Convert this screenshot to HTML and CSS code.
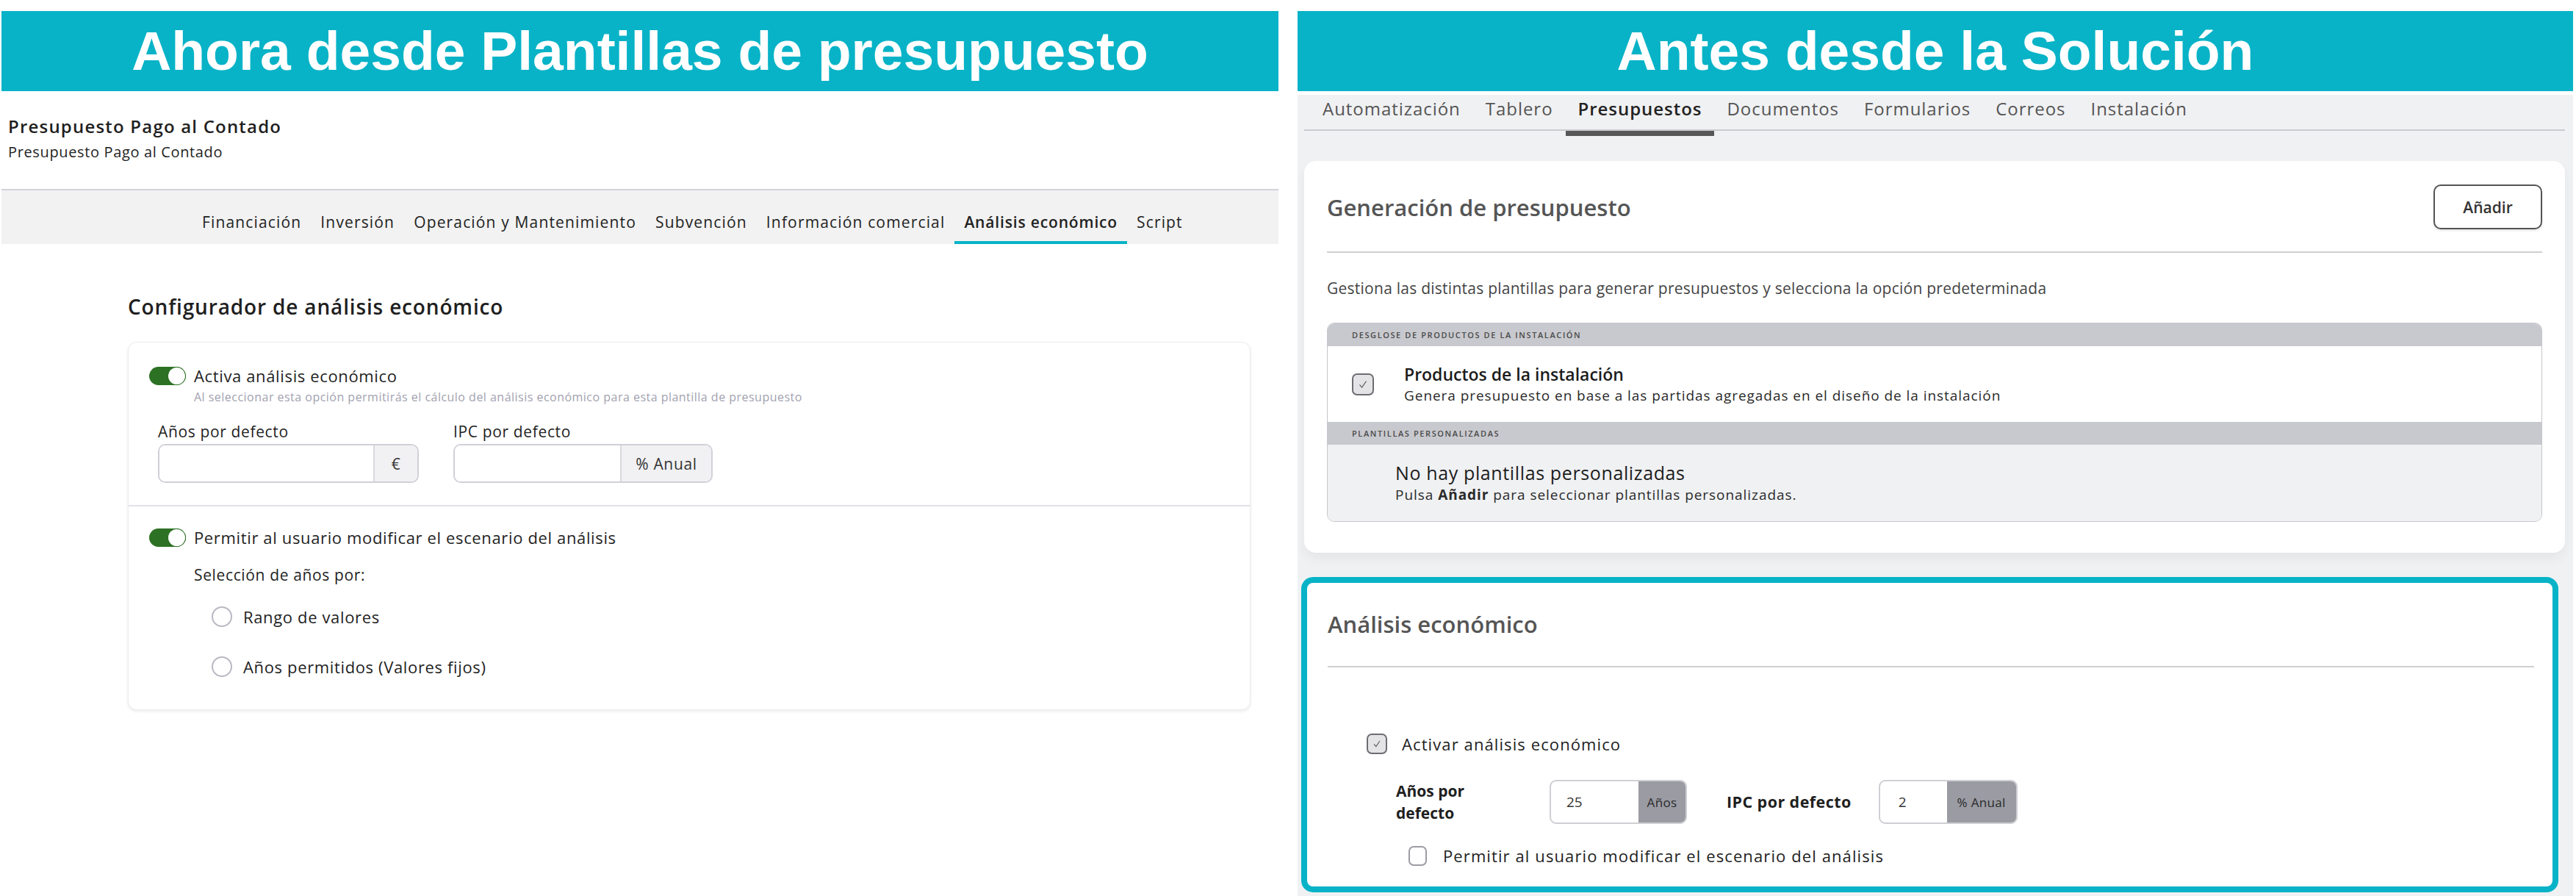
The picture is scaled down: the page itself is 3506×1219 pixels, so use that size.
FILE: index.html
```html
<!DOCTYPE html>
<html lang="es">

<head>
  <meta charset="UTF-8" />
  <meta name="viewport" content="width=device-width, initial-scale=1.0" />
  <title>Análisis económico</title>
  <link rel="stylesheet" href="styles.css">
</head>

<body>
  <div class="page">

    <!-- Nueva ubicación: plantilla de presupuesto -->
    <section class="side side-new">
      <header class="banner">Ahora desde Plantillas de presupuesto</header>

      <div class="tpl-head">
        <h2>Presupuesto Pago al Contado</h2>
        <p>Presupuesto Pago al Contado</p>
      </div>

      <nav class="tpl-tabs">
        <span class="tpl-tab">Financiación</span>
        <span class="tpl-tab">Inversión</span>
        <span class="tpl-tab">Operación y Mantenimiento</span>
        <span class="tpl-tab">Subvención</span>
        <span class="tpl-tab">Información comercial</span>
        <span class="tpl-tab active">Análisis económico</span>
        <span class="tpl-tab">Script</span>
      </nav>

      <main class="tpl-body">
        <h3>Configurador de análisis económico</h3>

        <div class="cfg-card">
          <div class="cfg-sec">
            <label class="switch-row">
              <span class="switch on"></span>
              <span>Activa análisis económico</span>
            </label>
            <div class="hint">Al seleccionar esta opción permitirás el cálculo del análisis económico para esta plantilla de presupuesto</div>

            <div class="fields">
              <div class="field">
                <div class="field-label">Años por defecto</div>
                <div class="group group-years">
                  <input type="text" />
                  <span class="addon">€</span>
                </div>
              </div>
              <div class="field">
                <div class="field-label">IPC por defecto</div>
                <div class="group group-ipc">
                  <input type="text" />
                  <span class="addon">% Anual</span>
                </div>
              </div>
            </div>
          </div>

          <div class="cfg-sec sec-scenario">
            <label class="switch-row">
              <span class="switch on"></span>
              <span>Permitir al usuario modificar el escenario del análisis</span>
            </label>
            <div class="years-by">Selección de años por:</div>
            <label class="radio-row"><span class="radio"></span>Rango de valores</label>
            <label class="radio-row"><span class="radio"></span>Años permitidos (Valores fijos)</label>
          </div>
        </div>
      </main>
    </section>

    <!-- Ubicación anterior: solución -->
    <section class="side side-old">
      <header class="banner">Antes desde la Solución</header>

      <div class="sol">
        <nav class="sol-tabs">
          <span class="sol-tab">Automatización</span>
          <span class="sol-tab">Tablero</span>
          <span class="sol-tab active">Presupuestos</span>
          <span class="sol-tab">Documentos</span>
          <span class="sol-tab">Formularios</span>
          <span class="sol-tab">Correos</span>
          <span class="sol-tab">Instalación</span>
        </nav>

        <div class="sol-card">
          <div class="sol-card-head">
            <h3>Generación de presupuesto</h3>
            <button class="btn-add">Añadir</button>
          </div>
          <p class="sol-desc">Gestiona las distintas plantillas para generar presupuestos y selecciona la opción predeterminada</p>

          <div class="tpl-list">
            <div class="tpl-list-head">Desglose de productos de la instalación</div>
            <div class="tpl-row">
              <span class="check checked">
                <svg viewBox="0 0 20 20" width="18" height="18"><polyline points="5,10.5 8.5,14.5 15,5" fill="none" stroke="#555" stroke-width="1.3" /></svg>
              </span>
              <div>
                <div class="tpl-row-title">Productos de la instalación</div>
                <div class="tpl-row-sub">Genera presupuesto en base a las partidas agregadas en el diseño de la instalación</div>
              </div>
            </div>
            <div class="tpl-list-head">Plantillas personalizadas</div>
            <div class="tpl-row empty">
              <div>
                <div class="empty-title">No hay plantillas personalizadas</div>
                <div class="tpl-row-sub">Pulsa <b>Añadir</b> para seleccionar plantillas personalizadas.</div>
              </div>
            </div>
          </div>
        </div>

        <div class="sol-card highlight">
          <div class="sol-card-head">
            <h3>Análisis económico</h3>
          </div>

          <label class="check-row activate">
            <span class="check checked">
              <svg viewBox="0 0 20 20" width="16" height="16"><polyline points="5,10.5 8.5,14.5 15,5" fill="none" stroke="#555" stroke-width="1.3" /></svg>
            </span>
            Activar análisis económico
          </label>

          <div class="sol-fields">
            <div class="sol-label">Años por defecto</div>
            <div class="sol-group g-years">
              <span class="val">25</span>
              <span class="sol-addon">Años</span>
            </div>
            <div class="sol-label wide">IPC por defecto</div>
            <div class="sol-group g-ipc">
              <span class="val">2</span>
              <span class="sol-addon">% Anual</span>
            </div>
          </div>

          <label class="check-row allow">
            <span class="check"></span>
            Permitir al usuario modificar el escenario del análisis
          </label>
        </div>
      </div>
    </section>

  </div>
</body>

</html>
```

FILE: styles.css
```css
:root {
  --teal: #08b3c7;
  --green: #2d7224;
  --ink: #1f1f1f;
  --gray-text: #555;
  --hint: #a2a2b0;
  --line: #d2d2d8;
  --sol-bg: #f0f1f3;
}

* {
  box-sizing: border-box;
}

html,
body {
  margin: 0;
  padding: 0;
  background: #fff;
  color: var(--ink);
  font-family: "Open Sans", "Noto Sans", sans-serif;
}

.page {
  display: flex;
  align-items: flex-start;
  padding-top: 15px;
  height: 1219px;
  overflow: hidden;
}

.banner {
  height: 109px;
  line-height: 109px;
  background: var(--teal);
  color: #fff;
  text-align: center;
  font-family: "Liberation Sans", Arial, sans-serif;
  font-weight: bold;
  font-size: 75px;
  letter-spacing: 0;
}

/* ---------- left: plantilla de presupuesto ---------- */

.side-new {
  width: 1738px;
  margin-left: 2px;
  letter-spacing: 0.04em;
}

.tpl-head {
  padding: 33px 0 0 9px;
}

.tpl-head h2 {
  margin: 0;
  font-size: 24px;
  line-height: 30px;
  font-weight: 600;
  letter-spacing: 0.05em;
}

.tpl-head p {
  margin: 6px 0 0;
  font-size: 20px;
  line-height: 28px;
}

.tpl-tabs {
  margin-top: 36px;
  display: flex;
  height: 75px;
  padding-left: 260px;
  background: #f2f2f2;
  border-top: 2px solid #d3d3dc;
}

.tpl-tab {
  height: 73px;
  padding: 28px 13px 0;
  font-size: 21px;
  line-height: 30px;
  letter-spacing: 0.055em;
  color: #222;
  white-space: nowrap;
}

.tpl-tab.active {
  font-weight: 600;
  letter-spacing: 0.04em;
  border-bottom: 4px solid var(--teal);
}

.tpl-body {
  padding-left: 172px;
}

.tpl-body h3 {
  margin: 67px 0 30px;
  font-size: 28px;
  line-height: 36px;
  font-weight: 600;
  letter-spacing: 0.03em;
}

.cfg-card {
  width: 1528px;
  background: #fff;
  border: 1px solid #ececef;
  border-radius: 12px;
  box-shadow: 0 2px 4px rgba(0, 0, 0, 0.08);
}

.cfg-sec {
  padding: 33px 28px 30px;
}

.cfg-sec + .cfg-sec {
  border-top: 2px solid #e2e2e6;
}

.sec-scenario {
  padding-top: 30px;
  padding-bottom: 44px;
}

.switch-row {
  display: flex;
  align-items: center;
  gap: 11px;
  font-size: 22px;
  line-height: 25px;
}

.switch {
  position: relative;
  width: 50px;
  height: 25px;
  border-radius: 13px;
  background: var(--green);
}

.switch::after {
  content: "";
  position: absolute;
  right: 1px;
  top: 1px;
  width: 23px;
  height: 23px;
  border-radius: 50%;
  background: #fff;
  box-shadow: 0 0 0 1px var(--green);
}

.hint {
  margin: 6px 0 0 61px;
  font-size: 16px;
  line-height: 20px;
  letter-spacing: 0.03em;
  color: var(--hint);
}

.fields {
  display: flex;
  gap: 47px;
  margin: 24px 0 0 12px;
}

.field-label {
  font-size: 21px;
  line-height: 26px;
  margin-bottom: 4px;
}

.group {
  display: flex;
  height: 53px;
  border: 2px solid #d0d0d8;
  border-radius: 10px;
  overflow: hidden;
}

.group input {
  flex: 1;
  min-width: 0;
  border: none;
  outline: none;
  background: #fff;
}

.group-years {
  width: 355px;
}

.group-ipc {
  width: 353px;
}

.addon {
  display: flex;
  align-items: center;
  justify-content: center;
  background: #f1f1f3;
  border-left: 2px solid #d8d8de;
  font-size: 21px;
  color: #333;
}

.group-years .addon {
  width: 60px;
}

.group-ipc .addon {
  width: 124px;
}

.years-by {
  margin: 25px 0 0 61px;
  font-size: 21px;
  line-height: 26px;
}

.radio-row {
  display: flex;
  align-items: center;
  gap: 15px;
  margin: 30px 0 0 85px;
  font-size: 22px;
  line-height: 28px;
}

.radio-row + .radio-row {
  margin-top: 40px;
}

.radio {
  width: 28px;
  height: 28px;
  border-radius: 50%;
  border: 2px solid #b9b9c4;
  background: #fff;
}

/* ---------- right: solución ---------- */

.side-old {
  width: 1736px;
  margin-left: 26px;
}

.sol {
  margin-top: 5px;
  height: 1090px;
  padding: 0 11px 0 9px;
  background: var(--sol-bg);
}

.sol-tabs {
  display: flex;
  height: 49px;
  padding-left: 8px;
  border-bottom: 2px solid #cbcbcf;
}

.sol-tab {
  position: relative;
  padding: 0 17px;
  font-size: 24px;
  line-height: 38px;
  letter-spacing: 0.04em;
  color: var(--gray-text);
  white-space: nowrap;
}

.sol-tab.active {
  color: #222;
  font-weight: 600;
}

.sol-tab.active::after {
  content: "";
  position: absolute;
  left: 0;
  right: 0;
  bottom: -9px;
  height: 7px;
  background: #575757;
}

.sol-card {
  margin-top: 41px;
  padding: 32px 31px 42px;
  background: #fff;
  border-radius: 16px;
  box-shadow: 0 8px 16px rgba(0, 0, 0, 0.05);
}

.sol-card-head {
  display: flex;
  align-items: center;
  justify-content: space-between;
  padding-bottom: 30px;
  border-bottom: 2px solid #cfcfd3;
}

.sol-card-head h3 {
  margin: 0;
  font-size: 31px;
  line-height: 40px;
  font-weight: 600;
  color: var(--gray-text);
}

.btn-add {
  width: 148px;
  height: 61px;
  background: #fff;
  border: 2px solid #555;
  border-radius: 10px;
  font-family: inherit;
  font-size: 21px;
  font-weight: 600;
  color: #333;
  box-shadow: 0 2px 3px rgba(0, 0, 0, 0.1);
}

.sol-desc {
  margin: 34px 0 33px;
  font-size: 21px;
  line-height: 28px;
  letter-spacing: 0.012em;
  color: #444;
}

.tpl-list {
  border: 1px solid #c6c7cc;
  border-radius: 10px;
  overflow: hidden;
}

.tpl-list-head {
  height: 31px;
  line-height: 31px;
  padding-left: 33px;
  background: #c8c9ce;
  font-size: 11px;
  font-weight: 600;
  letter-spacing: 1.6px;
  text-transform: uppercase;
  color: #4a4a4a;
}

.tpl-row {
  display: flex;
  align-items: center;
  gap: 41px;
  height: 103px;
  padding-left: 33px;
  background: #fff;
}

.tpl-row.empty {
  height: 104px;
  padding-left: 92px;
  background: var(--sol-bg);
}

.tpl-row-title {
  font-size: 23px;
  line-height: 30px;
  font-weight: 600;
  color: #1c1c1c;
}

.tpl-row-sub {
  font-size: 19px;
  line-height: 28px;
  letter-spacing: 0.05em;
  color: #2a2a2a;
}

.empty-title {
  font-size: 25px;
  line-height: 32px;
  letter-spacing: 0.025em;
  color: #1c1c1c;
}

.check {
  display: inline-flex;
  align-items: center;
  justify-content: center;
  flex: none;
  width: 30px;
  height: 30px;
  border: 2px solid #8a8a90;
  border-radius: 7px;
  background: #fff;
}

.check.checked {
  background: #e4e4e6;
  border-color: #6d6d72;
}

.sol-card.highlight {
  margin: 33px 9px 0 -4px;
  padding: 36px 25px 28px 28px;
  border: 8px solid var(--teal);
  box-shadow: none;
}

.highlight .sol-card-head {
  padding-bottom: 37px;
}

.check-row {
  display: flex;
  align-items: center;
  font-size: 22px;
  line-height: 28px;
  letter-spacing: 0.05em;
  color: #222;
}

.check-row.activate {
  gap: 20px;
  margin: 90px 0 0 53px;
}

.check-row.activate .check {
  width: 28px;
  height: 28px;
}

.check-row.allow {
  gap: 22px;
  margin: 29px 0 0 110px;
}

.check-row.allow .check {
  width: 25px;
  height: 27px;
  border-color: #9c9ca4;
}

.sol-fields {
  display: flex;
  align-items: center;
  margin: 35px 0 0 93px;
}

.sol-label {
  width: 209px;
  font-size: 21px;
  line-height: 30px;
  font-weight: 700;
  padding-right: 110px;
}

.sol-label.wide {
  width: auto;
  padding-right: 0;
  margin: 0 37px 0 54px;
  font-size: 21.5px;
  letter-spacing: 0.02em;
}

.sol-group {
  display: flex;
  height: 60px;
  border: 2px solid #cfcfd4;
  border-radius: 9px;
  overflow: hidden;
  background: #fff;
}

.g-years {
  width: 187px;
}

.g-ipc {
  width: 189px;
}

.val {
  flex: 1;
  padding-left: 21px;
  font-size: 19px;
  line-height: 56px;
  color: #333;
}

.g-ipc .val {
  padding-left: 25px;
}

.sol-addon {
  display: flex;
  align-items: center;
  justify-content: center;
  background: #9a9ba3;
  font-size: 17px;
  letter-spacing: 0.02em;
  color: #2a2a2a;
}

.g-years .sol-addon {
  width: 64px;
}

.g-ipc .sol-addon {
  width: 94px;
}
```
